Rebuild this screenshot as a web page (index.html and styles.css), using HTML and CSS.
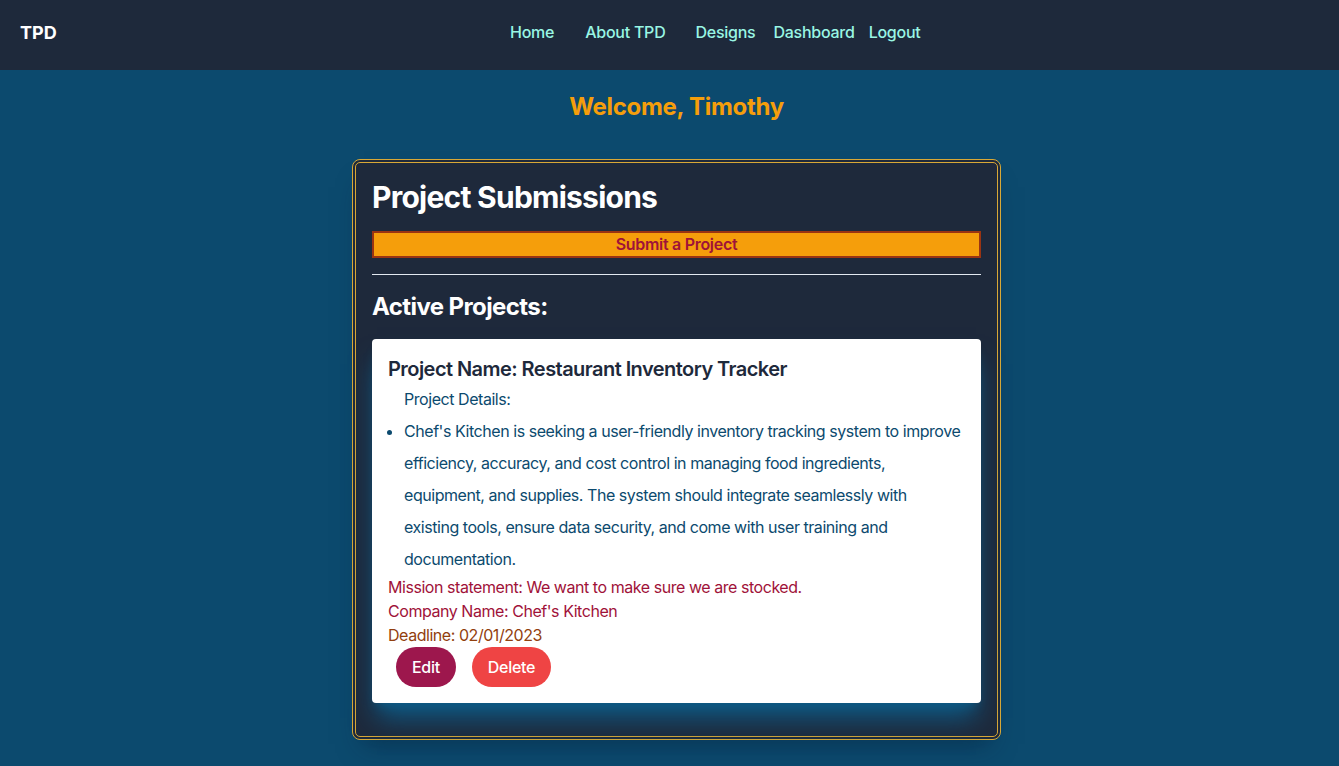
FILE: index.html
```html
<!DOCTYPE html>
<html lang="en">
<head>
<meta charset="utf-8">
<title>TPD Dashboard</title>
<link rel="stylesheet" href="styles.css">
</head>
<body>
<nav class="navbar">
  <a class="brand" href="#">TPD</a>
  <div class="nav-links">
    <a class="nav-link home" href="#">Home</a>
    <a class="nav-link about" href="#">About TPD</a>
    <a class="nav-link designs" href="#">Designs</a>
    <a class="nav-link dash" href="#">Dashboard</a>
    <a class="nav-link" href="#">Logout</a>
  </div>
</nav>
<main class="main">
  <h1 class="welcome">Welcome, Timothy</h1>
  <section class="panel">
    <h2 class="panel-title">Project Submissions</h2>
    <button class="submit-btn">Submit a Project</button>
    <hr class="divider">
    <h3 class="section-title">Active Projects:</h3>
    <article class="project-card">
      <h4 class="project-name">Project Name: Restaurant Inventory Tracker</h4>
      <p class="details-label">Project Details:</p>
      <ul class="details-list">
        <li>Chef's Kitchen is seeking a user-friendly inventory tracking system to improve efficiency, accuracy, and cost control in managing food ingredients, equipment, and supplies. The system should integrate seamlessly with existing tools, ensure data security, and come with user training and documentation.</li>
      </ul>
      <p class="meta mission">Mission statement: We want to make sure we are stocked.</p>
      <p class="meta company">Company Name: Chef's Kitchen</p>
      <p class="meta deadline">Deadline: 02/01/2023</p>
      <div class="actions">
        <button class="pill edit">Edit</button>
        <button class="pill delete">Delete</button>
      </div>
    </article>
  </section>
</main>
</body>
</html>
```
FILE: styles.css
```css
* { box-sizing: border-box; }
html, body {
  margin: 0;
  padding: 0;
}
body {
  background: #0c4a6e;
  font-family: Inter, "Noto Sans", "Liberation Sans", sans-serif;
  min-height: 766px;
}
.navbar {
  height: 70px;
  background: #1e293b;
  display: flex;
  align-items: center;
  padding: 0 0 6px 20px;
}
.brand {
  color: #ffffff;
  font-weight: 700;
  font-size: 18px;
  text-decoration: none;
  width: 490px;
}
.nav-links {
  display: flex;
  align-items: center;
}
.nav-link {
  color: #99f6e4;
  text-decoration: none;
  font-size: 16px;
  font-weight: 500;
  letter-spacing: -0.25px;
}
.home { margin-right: 31px; }
.about { margin-right: 30px; }
.designs { margin-right: 18px; }
.dash { margin-right: 14px; }

.main {
  padding-left: 14px;
  display: flex;
  flex-direction: column;
  align-items: center;
  padding-bottom: 27px;
}
.welcome {
  margin: 21px 0 0;
  font-size: 24px;
  line-height: 32px;
  font-weight: 700;
  color: #f59e0b;
  letter-spacing: -0.3px;
}
.panel {
  margin-top: 36px;
  width: 649px;
  background: #1e293b;
  border: 4px double #d9a836;
  border-radius: 8px;
  padding: 16px;
  box-shadow: 0 16px 24px -12px rgba(8, 30, 55, 0.5);
}
.panel-title {
  margin: 0;
  color: #ffffff;
  font-size: 30px;
  line-height: 36px;
  font-weight: 700;
  letter-spacing: -0.75px;
}
.submit-btn {
  display: block;
  width: 100%;
  margin-top: 16px;
  background: #f59e0b;
  border: 2px solid #9a3412;
  color: #9f1239;
  font-family: inherit;
  font-size: 16px;
  font-weight: 600;
  line-height: 23px;
  padding: 0;
  letter-spacing: -0.3px;
}
.divider {
  margin: 16px 0;
  border: 0;
  border-top: 1px solid #e2e8f0;
  height: 0;
}
.section-title {
  margin: 0;
  color: #ffffff;
  font-size: 24px;
  line-height: 32px;
  font-weight: 700;
  letter-spacing: -0.6px;
}
.project-card {
  margin: 16px 0 17px;
  background: #ffffff;
  border-radius: 4px;
  padding: 16px;
  box-shadow: 0 20px 25px -5px #0e5a85, 0 8px 10px -6px #0e5a85;
}
.project-name {
  margin: 0;
  color: #1e293b;
  font-size: 20px;
  line-height: 28px;
  font-weight: 600;
  letter-spacing: -0.55px;
}
.details-label {
  margin: 0;
  padding-left: 16px;
  color: #0c4a6e;
  font-size: 16px;
  line-height: 32px;
  letter-spacing: -0.45px;
}
.details-list {
  margin: 0;
  padding-left: 16px;
  padding-right: 0;
  color: #0c4a6e;
  font-size: 16px;
  line-height: 32px;
  letter-spacing: -0.45px;
}
.meta {
  margin: 0;
  font-size: 16px;
  line-height: 24px;
  letter-spacing: -0.45px;
}
.mission, .company { color: #9f1239; }
.deadline { color: #92400e; }
.actions {
  display: flex;
}
.pill {
  height: 40px;
  border: 0;
  border-radius: 9999px;
  padding: 0 16px;
  margin: 0 8px;
  color: #ffffff;
  font-family: inherit;
  font-size: 16px;
  font-weight: 500;
  letter-spacing: -0.3px;
}
.edit { background: #9d174d; }
.delete { background: #ef4444; }
```
